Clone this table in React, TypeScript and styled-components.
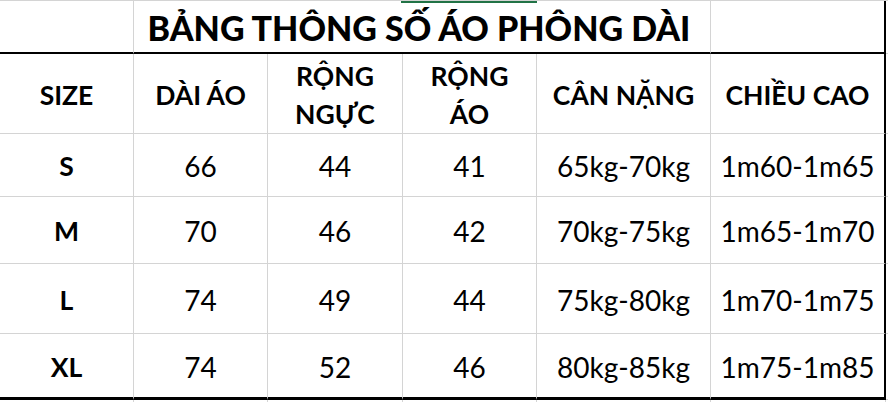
import React from "react";
import styled, { createGlobalStyle, css } from "styled-components";

const Global = createGlobalStyle`
  html, body { margin: 0; padding: 0; background: #ffffff; }
  body { font-family: Lato, "Noto Sans", sans-serif; color: #000; }
`;

const GRID = "#d4d4d4";

const Sheet = styled.div`
  position: relative;
  display: grid;
  grid-template-columns: 134px 134px 135px 134px 174px 175px 40px;
  grid-template-rows: 53px 80px 63px 67px 70px 66px 40px;
  border-top: 1px solid ${GRID};
  width: 888px;
  height: 402px;
  overflow: hidden;
`;

const Cell = styled.div<{
  $span?: number;
  $edge?: boolean;
  $title?: boolean;
  $last?: boolean;
  $kind?: "title" | "head" | "size" | "data" | "blank";
}>`
  box-sizing: border-box;
  display: flex;
  align-items: center;
  justify-content: center;
  text-align: center;
  border-right: 1px solid ${GRID};
  border-bottom: 1px solid ${GRID};
  white-space: nowrap;
  ${(p) => p.$span && css`grid-column: span ${p.$span};`}
  ${(p) => p.$edge && css`border-right: 2px solid #000;`}
  ${(p) => p.$title && css`border-bottom: 2px solid #000;`}
  ${(p) => p.$last && css`border-bottom: 3px solid #000;`}
  ${(p) =>
    p.$kind === "title" &&
    css`
      font-size: 34px;
      font-weight: 900;
      letter-spacing: 0px;
      padding-top: 2px;
      padding-right: 6px;
    `}
  ${(p) =>
    p.$kind === "head" &&
    css`
      font-size: 26.5px;
      font-weight: 700;
      line-height: 38px;
      padding-top: 3px;
    `}
  ${(p) =>
    p.$kind === "size" &&
    css`
      font-size: 26.5px;
      font-weight: 700;
      padding-top: 2px;
    `}
  ${(p) =>
    p.$kind === "data" &&
    css`
      font-size: 28px;
      font-weight: 400;
      padding-top: 2px;
    `}
`;

const Selection = styled.div`
  position: absolute;
  top: 0;
  left: 401px;
  width: 136px;
  height: 2px;
  background: #217346;
`;

const headers = ["SIZE", "DÀI ÁO", "RỘNG\nNGỰC", "RỘNG\nÁO", "CÂN NẶNG", "CHIỀU CAO"];

const rows = [
  ["S", "66", "44", "41", "65kg-70kg", "1m60-1m65"],
  ["M", "70", "46", "42", "70kg-75kg", "1m65-1m70"],
  ["L", "74", "49", "44", "75kg-80kg", "1m70-1m75"],
  ["XL", "74", "52", "46", "80kg-85kg", "1m75-1m85"],
];

const Lines = ({ text }: { text: string }) => (
  <span>
    {text.split("\n").map((t, i) => (
      <React.Fragment key={i}>
        {i > 0 && <br />}
        {t}
      </React.Fragment>
    ))}
  </span>
);

export default function App() {
  return (
    <>
      <Global />
      <Sheet>
        <Cell $title />
        <Cell $title $span={4} $kind="title">
          BẢNG THÔNG SỐ ÁO PHÔNG DÀI
        </Cell>
        <Cell $title $edge />
        <Cell />

        {headers.map((h, i) => (
          <Cell key={h} $kind="head" $edge={i === 5}>
            <Lines text={h} />
          </Cell>
        ))}
        <Cell />

        {rows.map((r, ri) =>
          [
            ...r.map((v, ci) => (
              <Cell
                key={`${ri}-${ci}`}
                $kind={ci === 0 ? "size" : "data"}
                $edge={ci === 5}
                $last={ri === rows.length - 1}
              >
                {v}
              </Cell>
            )),
            <Cell key={`${ri}-x`} />,
          ]
        )}

        {Array.from({ length: 7 }).map((_, i) => (
          <Cell key={`b-${i}`} />
        ))}
        <Selection />
      </Sheet>
    </>
  );
}
